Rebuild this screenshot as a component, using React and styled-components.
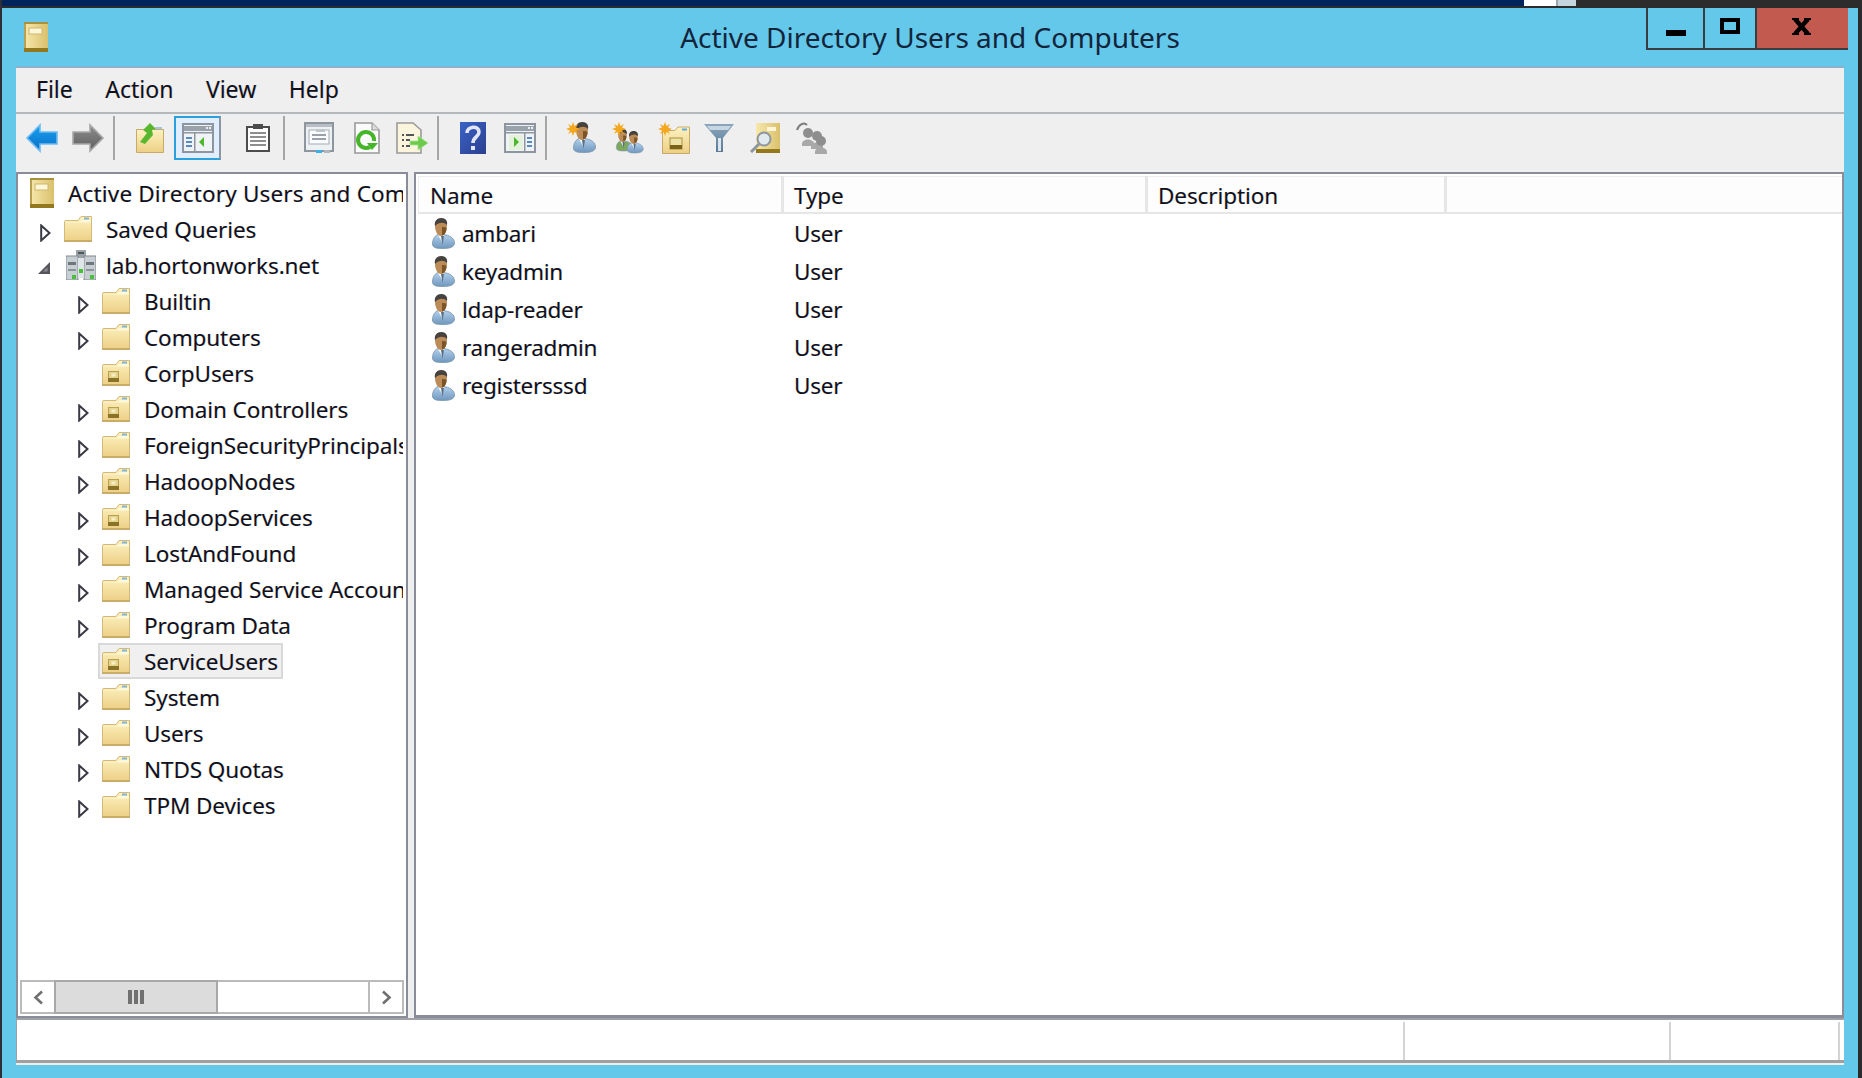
import React from "react";
import styled, { createGlobalStyle } from "styled-components";

const GlobalStyle = createGlobalStyle`
  html, body {
    margin: 0;
    height: 100%;
    overflow: hidden;
    background: #63c8ea;
    font-family: "Noto Sans", "Open Sans", sans-serif;
    color: #10101c;
    text-shadow: -0.5px 0 0 rgba(255, 170, 40, 0.3), 0.5px 0 0 rgba(30, 140, 255, 0.3);
  }
`;

const Page = styled.div`
  width: 1862px;
  height: 1078px;
  display: flex;
  flex-direction: column;
  border-left: 2px solid #2c2f33;
  border-right: 4px solid #2c2c2c;
  box-sizing: border-box;
  overflow: hidden;
  background: #63c8ea;
`;

const TopStrip = styled.div`
  height: 8px;
  margin: 0 -4px 0 -2px;
  display: flex;
  background: #2c2c2c;
`;

const TaskNavy = styled.div`
  width: 1524px;
  height: 6px;
  background: #00245c;
`;

const TaskWhite = styled.div`
  width: 32px;
  height: 6px;
  background: #fff;
`;

const TaskGrey = styled.div`
  width: 20px;
  height: 6px;
  background: #c5d5dd;
  border-left: 2px solid #9aa5ab;
  box-sizing: border-box;
`;

const TitleBar = styled.div`
  height: 58px;
  display: grid;
  grid-template-columns: 1fr auto 1fr;
  align-items: start;
  padding-left: 10px;
  padding-right: 10px;
`;

const TitleIcon = styled.div`
  padding: 14px 0 0 12px;
  line-height: 0;
`;

const TitleText = styled.div`
  padding-top: 11px;
  font-size: 28px;
  line-height: 36px;
  color: #14243a;
  white-space: nowrap;
  text-shadow: none;
`;

const WindowButtons = styled.div`
  justify-self: end;
  display: flex;
  height: 42px;
  border: 2px solid #3a3d40;
  border-top: 0;
  box-sizing: border-box;
`;

const WindowButton = styled.div`
  width: ${(p) => p.$w}px;
  display: flex;
  align-items: center;
  justify-content: center;
  padding-right: 2px;
  box-sizing: content-box;
  margin-right: -2px;
  background: ${(p) => (p.$close ? "#c25a50" : "transparent")};
  border-left: ${(p) => (p.$first ? "0" : "2px solid #3a3d40")};
`;

const Client = styled.div`
  margin: 0 14px 13px 14px;
  flex: 1;
  display: flex;
  flex-direction: column;
  background: #efefef;
  border-top: 2px solid #8ab2c8;
`;

const MenuBar = styled.div`
  display: flex;
  align-items: center;
  gap: 32.5px;
  padding: 0 0 2px 20px;
  box-sizing: content-box;
  height: 42px;
  border-bottom: 2px solid #b5b8bb;
  font-size: 23px;
`;

const Toolbar = styled.div`
  display: flex;
  align-items: flex-start;
  padding: 2px 0 0 10px;
  box-sizing: border-box;
  height: 58px;
`;

const ToolSlot = styled.div`
  height: 44px;
  width: ${(p) => p.$w}px;
  margin-left: ${(p) => p.$ml}px;
  display: flex;
  align-items: center;
  justify-content: center;
  box-sizing: border-box;
  ${(p) => p.$active && "background: #e0eeff; border: 2px solid #2aa0dc; border-right-color: #8a97a0;"}
`;

const ToolSep = styled.div`
  height: 44px;
  width: 2px;
  margin-left: ${(p) => p.$ml}px;
  background: #a4a6a8;
`;

const Panes = styled.div`
  height: 846px;
  display: flex;
  gap: 6px;
`;

const TreePane = styled.div`
  width: 392px;
  display: flex;
  flex-direction: column;
  background: #fff;
  border: 2px solid #8a8d99;
  box-sizing: border-box;
`;

const TreeScroll = styled.div`
  flex: 1;
  margin: 1px 3px 0 0;
  overflow: hidden;
`;

const TreeRow = styled.div`
  height: 36px;
  display: flex;
  align-items: center;
  padding-left: ${(p) => p.$indent}px;
  white-space: nowrap;
  font-size: 22.5px;
  letter-spacing: -0.1px;
`;

const Arrow = styled.div`
  width: 24px;
  flex: none;
  display: flex;
  line-height: 0;
  padding-top: ${(p) => (p.$open ? 5 : 7)}px;
  margin-left: ${(p) => (p.$open ? -2 : 0)}px;
  margin-right: ${(p) => (p.$open ? 2 : 0)}px;
`;

const TreeLabel = styled.div`
  height: 36px;
  display: flex;
  align-items: center;
  gap: 14px;
  margin-left: -4px;
  padding: 0 3px 0 2px;
  border: 2px solid ${(p) => (p.$selected ? "#d9d9d9" : "transparent")};
  background: ${(p) => (p.$selected ? "#f0f0f0" : "transparent")};
  box-sizing: border-box;
`;

const RootLabel = styled.div`
  display: flex;
  align-items: center;
  gap: 14px;
  letter-spacing: 0.17px;
`;

const ScrollBar = styled.div`
  height: 34px;
  margin: 0 2px 2px 2px;
  display: flex;
  border: 2px solid #bbb;
  box-sizing: border-box;
  background: #fff;
`;

const ScrollButton = styled.div`
  width: 32px;
  display: flex;
  align-items: center;
  justify-content: center;
  border-left: ${(p) => (p.$right ? "2px solid #bbb" : "0")};
  flex: none;
`;

const ScrollThumb = styled.div`
  width: 164px;
  display: flex;
  align-items: center;
  justify-content: center;
  box-sizing: border-box;
  background: #dcdcdc;
  border: 2px solid #a8a8a8;
  margin: -2px 0;
  flex: none;
`;

const ScrollTrack = styled.div`
  flex: 1;
`;

const ListPane = styled.div`
  flex: 1;
  background: #fff;
  border: 2px solid #8a8d99;
  border-bottom-width: 3px;
  box-sizing: border-box;
`;

const ListHeader = styled.div`
  height: 38px;
  display: flex;
  margin: 2px 0 0 2px;
  border-bottom: 2px solid #e6e6e6;
  background: #fdfdfd;
  box-shadow: inset 1px 1px 0 #eeeeee;
  font-size: 22.5px;
  letter-spacing: -0.1px;
  box-sizing: border-box;
`;

const HeaderCell = styled.div`
  width: ${(p) => p.$w}px;
  padding: 2px 0 0 ${(p) => p.$pad}px;
  box-sizing: border-box;
  display: flex;
  align-items: center;
  border-right: 3px solid #e6e6e6;
`;

const ListRow = styled.div`
  height: 38px;
  display: flex;
  align-items: center;
  margin-left: 2px;
  padding-top: 1px;
  box-sizing: border-box;
  font-size: 22.5px;
  letter-spacing: -0.25px;
`;

const NameCell = styled.div`
  width: 366px;
  padding-left: 14px;
  box-sizing: border-box;
  display: flex;
  align-items: center;
  gap: 7px;
`;

const TypeCell = styled.div`
  padding-left: 10px;
`;

const StatusBar = styled.div`
  height: 45px;
  display: flex;
  justify-content: flex-end;
  background: #fff;
  border-top: 2px solid #a0a0a8;
  border-bottom: 3px solid #a0a0a0;
  border-left: 1px solid #a0a0a0;
  box-sizing: border-box;
  padding: 2px 3px 0 0;
`;

const StatusCell = styled.div`
  width: ${(p) => p.$w}px;
  border-left: 2px solid #d4d4d4;
`;

const GradientDefs = styled.svg`
  display: block;
  width: 0;
  height: 0;
`;

const DomainSvg = styled.svg`
  margin: 0 -4px 0 2px;
  flex: none;
`;

const Defs = () => (
  <GradientDefs>
    <defs>
      <linearGradient id="gFolder" x1="0" y1="0" x2="0" y2="1">
        <stop offset="0" stopColor="#fdf2c0" />
        <stop offset="1" stopColor="#edcf85" />
      </linearGradient>
      <linearGradient id="gBook" x1="0" y1="0" x2="1" y2="0">
        <stop offset="0" stopColor="#f7e9ac" />
        <stop offset="1" stopColor="#d9c06c" />
      </linearGradient>
      <linearGradient id="gBlue" x1="0" y1="0" x2="0" y2="1">
        <stop offset="0" stopColor="#17a1f2" />
        <stop offset="1" stopColor="#0c6fc4" />
      </linearGradient>
      <linearGradient id="gGrey" x1="0" y1="0" x2="0" y2="1">
        <stop offset="0" stopColor="#8c8c8c" />
        <stop offset="1" stopColor="#5f5f5f" />
      </linearGradient>
      <linearGradient id="gBody" x1="0" y1="0" x2="0" y2="1">
        <stop offset="0" stopColor="#b4d2ee" />
        <stop offset="1" stopColor="#6f97bd" />
      </linearGradient>
      <linearGradient id="gHelp" x1="0" y1="0" x2="1" y2="1">
        <stop offset="0" stopColor="#3a63c6" />
        <stop offset="1" stopColor="#2a3f8e" />
      </linearGradient>
      <linearGradient id="gFunnel" x1="0" y1="0" x2="0" y2="1">
        <stop offset="0" stopColor="#8aa6be" />
        <stop offset="1" stopColor="#5c7a96" />
      </linearGradient>
    </defs>
  </GradientDefs>
);

const BookIcon = ({ w = 24, h = 30 }) => (
  <svg width={w} height={h} viewBox="0 0 24 30">
    <rect width="24" height="30" fill="url(#gBook)" />
    <rect width="24" height="2" fill="#a8903f" />
    <rect y="26" width="24" height="4" fill="#94781f" />
    <rect x="0" y="2" width="2" height="24" fill="#b8a050" />
    <rect x="5" y="6" width="13" height="6" fill="#fdf7d8" stroke="#cdb870" />
  </svg>
);

const FolderIcon = ({ ou }) => (
  <svg width="28" height="26" viewBox="0 0 28 26">
    <path d="M0.5 5.5 Q0.5 4.5 2 4.5 H14 L17 0.5 H27.5 V25.5 H0.5 Z" fill="url(#gFolder)" stroke="#d3b97a" />
    <rect x="20" y="1.5" width="5" height="2" fill="#7fb2dc" />
    <path d="M1 6 H14.5 L17.5 4 H27 V6.5 H1 Z" fill="#fef8da" />
    <rect x="0" y="24" width="28" height="2" fill="#c9ac6a" />
    {ou && <rect x="6.5" y="11.5" width="10" height="10" fill="#e3d38c" stroke="#b8a050" />}
    {ou && <rect x="9.5" y="13.5" width="4" height="3" fill="#f7efc4" />}
    {ou && <rect x="6" y="18" width="11" height="4" fill="#8a7226" />}
  </svg>
);

const DomainIcon = () => (
  <DomainSvg width="30" height="30" viewBox="0 0 30 30">
    <rect x="10" y="0" width="10" height="26" fill="#9aa3a8" />
    <rect x="0" y="6" width="12" height="24" fill="#c8cfd2" stroke="#808a8f" />
    <rect x="18" y="6" width="12" height="24" fill="#c8cfd2" stroke="#808a8f" />
    <rect x="12" y="8" width="6" height="20" fill="#dfe4e6" />
    <rect x="2" y="12" width="8" height="3" fill="#6d777c" />
    <rect x="20" y="12" width="8" height="3" fill="#6d777c" />
    <rect x="2" y="19" width="8" height="2" fill="#8a9499" />
    <rect x="20" y="19" width="8" height="2" fill="#8a9499" />
    <rect x="12" y="2" width="6" height="2" fill="#4d565a" />
    <rect x="6" y="25" width="4" height="4" fill="#48c038" />
    <rect x="24" y="25" width="4" height="4" fill="#48c038" />
    <rect x="13" y="19" width="4" height="4" fill="#48c038" />
  </DomainSvg>
);

const UserFigure = ({ x = 0, y = 0, s = 1, body = "url(#gBody)" }) => (
  <g transform={`translate(${x} ${y}) scale(${s})`}>
    <path d="M0.5 26 C0.5 20 4 16 9 16 L14 17 C19 18 22.5 21 22.5 25 C22.5 29 18 30.5 11 30.5 C5 30.5 0.5 30 0.5 26 Z" fill={body} stroke="#7f9ab0" strokeWidth="0.9" />
    <path d="M6 17 L10 24 L12 17 Z" fill="#f2f6fa" />
    <path d="M9 18 L10.5 27 L12 18 Z" fill="#5a6f84" />
    <path d="M3 8 C3 3 5.5 0.5 9 0.5 C12.5 0.5 15 3 15 8 C15 13 12.5 18 9 18 C5.5 18 3 13 3 8 Z" fill="#bc8c58" />
    <path d="M3 8 C2 3 5 0 9.5 0 C13.5 0 16 3 15 7 C12 4 7 4 3 8 Z" fill="#45423f" />
    <path d="M10 9 C12.5 9 14.5 9 14.5 11 C14.5 14 12 17.5 10 17.5 Z" fill="#7d5428" />
  </g>
);

const UserIcon = () => (
  <svg width="23" height="32" viewBox="0 0 23 32">
    <UserFigure />
  </svg>
);

const TreeClosed = () => (
  <svg width="11" height="18" viewBox="0 0 11 18">
    <path d="M1.2 1.5 L9.5 9 L1.2 16.5 Z" fill="#fff" stroke="#3a3a44" strokeWidth="2" />
  </svg>
);

const TreeOpen = () => (
  <svg width="12" height="12" viewBox="0 0 12 12">
    <path d="M12 0 V12 H0 Z" fill="#55555c" />
    <path d="M9.5 5 V9.5 H5 Z" fill="#8c8c90" />
  </svg>
);

const MinGlyph = () => (
  <svg width="20" height="16" viewBox="0 0 20 16">
    <rect y="10" width="20" height="6" fill="#000" />
  </svg>
);

const MaxGlyph = () => (
  <svg width="20" height="16" viewBox="0 0 20 16" style={{ marginBottom: 4 }}>
    <rect x="2" y="2" width="16" height="12" fill="none" stroke="#000" strokeWidth="4" />
  </svg>
);

const CloseGlyph = () => (
  <svg width="19" height="17" viewBox="0 0 19 17" style={{ marginBottom: 4 }}>
    <path d="M3 1 L16 16 M16 1 L3 16" stroke="#000" strokeWidth="4.4" fill="none" />
    <path d="M0 1 H7 M12 1 H19 M0 16 H7 M12 16 H19" stroke="#000" strokeWidth="2" fill="none" />
  </svg>
);

const Chevron = ({ right }) => (
  <svg width="11" height="15" viewBox="0 0 11 15">
    <path d={right ? "M2 1.5 L8.5 7.5 L2 13.5" : "M9 1.5 L2.5 7.5 L9 13.5"} fill="none" stroke="#707070" strokeWidth="2.6" />
  </svg>
);

const GripIcon = () => (
  <svg width="16" height="14" viewBox="0 0 16 14">
    <rect width="4" height="14" fill="#707070" />
    <rect x="6" width="4" height="14" fill="#707070" />
    <rect x="12" width="4" height="14" fill="#707070" />
  </svg>
);

const BackIcon = () => (
  <svg width="32" height="30" viewBox="0 0 32 30">
    <path d="M1 15 L14 2 V9 H31 V21 H14 V28 Z" fill="url(#gBlue)" stroke="#6dbcf2" strokeWidth="1.6" />
  </svg>
);

const ForwardIcon = () => (
  <svg width="32" height="30" viewBox="0 0 32 30">
    <path d="M31 15 L18 2 V9 H1 V21 H18 V28 Z" fill="url(#gGrey)" stroke="#a8a8a8" strokeWidth="1.6" />
  </svg>
);

const UpFolderIcon = () => (
  <svg width="28" height="30" viewBox="0 0 28 30">
    <path d="M0.5 6.5 H27.5 V29.5 H0.5 Z" fill="url(#gFolder)" stroke="#c7a968" />
    <path d="M4 19 L11 10 L7 7 L14 0 L20 6 L16 7 L17 12 L9 21 Z" fill="#58b72e" />
    <path d="M19 5 H26" stroke="#7fb2dc" strokeWidth="1.4" />
  </svg>
);

const PaneFrame = ({ children }) => (
  <>
    <rect x="1" y="1" width="30" height="28" fill="#f0f3f6" stroke="#8d959e" strokeWidth="2" />
    <rect x="2" y="3" width="28" height="5" fill="#9aa3ac" />
    <rect x="24" y="4" width="2" height="2" fill="#e8ecef" />
    <rect x="27" y="4" width="2" height="2" fill="#e8ecef" />
    <rect x="2" y="9" width="28" height="1.5" fill="#8d959e" />
    {children}
  </>
);

const ToggleTreeIcon = () => (
  <svg width="32" height="30" viewBox="0 0 32 30">
    <PaneFrame>
      <rect x="12" y="10" width="1.5" height="18" fill="#8d959e" />
      <rect x="4" y="14" width="6" height="2" fill="#5a8ac4" />
      <rect x="4" y="18" width="6" height="2" fill="#5a8ac4" />
      <rect x="4" y="22" width="6" height="2" fill="#5a8ac4" />
      <path d="M17 19 L22 14 V24 Z" fill="#4eb52c" />
    </PaneFrame>
  </svg>
);

const ActionPaneIcon = () => (
  <svg width="32" height="30" viewBox="0 0 32 30">
    <PaneFrame>
      <rect x="20" y="10" width="1.5" height="18" fill="#8d959e" />
      <rect x="23" y="14" width="5" height="2" fill="#5a8ac4" />
      <rect x="23" y="18" width="5" height="2" fill="#5a8ac4" />
      <rect x="23" y="22" width="5" height="2" fill="#5a8ac4" />
      <rect x="5" y="12" width="14" height="15" fill="#e4f2dc" />
      <path d="M10 14 L15 19 L10 24 Z" fill="#4eb52c" />
    </PaneFrame>
  </svg>
);

const ClipboardIcon = () => (
  <svg width="24" height="28" viewBox="0 0 24 28">
    <rect x="1" y="3" width="22" height="24" fill="#fff" stroke="#4c4c4c" strokeWidth="2" />
    <rect x="7" y="0" width="10" height="5" fill="#4c4c4c" />
    <path d="M4 9 H20 M4 13 H20 M4 17 H20 M4 21 H20" stroke="#8e8e8e" strokeWidth="2" />
  </svg>
);

const PropsIcon = () => (
  <svg width="30" height="32" viewBox="0 0 30 32">
    <rect x="1" y="1" width="28" height="28" fill="#eef1f4" stroke="#8d959e" strokeWidth="2" />
    <rect x="2" y="2" width="26" height="3" fill="#b8bec4" />
    <rect x="5" y="8" width="20" height="14" fill="#fafbfc" stroke="#a6adb4" />
    <rect x="12" y="7" width="9" height="3" fill="#c0c6cc" />
    <path d="M8 13 H22 M8 17 H22" stroke="#9aa1a8" strokeWidth="2" />
    <rect x="12" y="28" width="6" height="3" fill="#38b0e8" />
    <rect x="20" y="28" width="6" height="3" fill="#b0b6bc" />
  </svg>
);

const RefreshIcon = () => (
  <svg width="26" height="32" viewBox="0 0 26 32">
    <path d="M1 1 H18 L25 8 V31 H1 Z" fill="#fbfbfb" stroke="#9a9a9a" strokeWidth="1.6" />
    <path d="M18 1 V8 H25" fill="#dcdcdc" stroke="#9a9a9a" strokeWidth="1.2" />
    <path d="M16 25 A8 8 0 1 1 20 19" fill="none" stroke="#46b52a" strokeWidth="4" />
    <path d="M13 21 H24 L18 28 Z" fill="#46b52a" />
  </svg>
);

const ExportIcon = () => (
  <svg width="32" height="32" viewBox="0 0 32 32">
    <path d="M1 1 H17 L25 8 V31 H1 Z" fill="#faf5dc" stroke="#9a9a9a" strokeWidth="1.6" />
    <path d="M6 13 H18 M6 18 H14 M6 24 H14" stroke="#55555c" strokeWidth="2" strokeDasharray="2 2 8 0" />
    <path d="M14 19 H22 V14 L32 21 L22 28 V23 H14 Z" fill="#6ccb4c" stroke="#a6e48e" strokeWidth="0.8" />
  </svg>
);

const HelpIcon = () => (
  <svg width="26" height="32" viewBox="0 0 26 32">
    <rect width="26" height="32" fill="url(#gHelp)" />
    <path d="M7 11 C7 4 19 3 19 10 C19 15 13 15 13 21" fill="none" stroke="#e2e6f6" strokeWidth="3.6" />
    <rect x="11" y="24" width="4" height="4" fill="#e2e6f6" />
  </svg>
);

const Spark = ({ x = 0, y = 0 }) => (
  <g transform={`translate(${x} ${y})`}>
    <path d="M7 0 L8.5 4 L12 2 L10 5.5 L14 7 L10 8.5 L12 12 L8.5 10 L7 14 L5.5 10 L2 12 L4 8.5 L0 7 L4 5.5 L2 2 L5.5 4 Z" fill="#f4a820" />
  </g>
);

const NewUserIcon = () => (
  <svg width="30" height="32" viewBox="0 0 30 32">
    <UserFigure x="7" y="0" s="1" />
    <Spark />
  </svg>
);

const NewGroupIcon = () => (
  <svg width="32" height="32" viewBox="0 0 32 32">
    <UserFigure x="4" y="7" s="0.72" body="#7ea860" />
    <UserFigure x="15" y="9" s="0.72" />
    <Spark />
  </svg>
);

const NewOuIcon = () => (
  <svg width="32" height="32" viewBox="0 0 32 32">
    <path d="M4.5 8.5 H17 L20 5 H31.5 V31.5 H4.5 Z" fill="url(#gFolder)" stroke="#c7a968" />
    <rect x="24" y="6.5" width="5" height="2" fill="#5fa8e0" />
    <rect x="12" y="16" width="12" height="11" fill="#efe2a8" stroke="#a68f3c" />
    <rect x="12" y="23" width="12" height="4" fill="#7a6318" />
    <Spark />
  </svg>
);

const FilterIcon = () => (
  <svg width="30" height="30" viewBox="0 0 30 30">
    <path d="M0 1 H30 L19 15 V29 H12 V15 Z" fill="url(#gFunnel)" />
    <path d="M3 3 H27 L24 7 H6 Z" fill="#c6d6e2" />
    <rect x="14" y="15" width="3" height="13" fill="#dbe6ee" />
  </svg>
);

const FindIcon = () => (
  <svg width="30" height="30" viewBox="0 0 30 30">
    <rect x="6" y="0" width="24" height="30" fill="url(#gBook)" />
    <rect x="6" y="26" width="24" height="4" fill="#94781f" />
    <rect x="17" y="4" width="9" height="4" fill="#fdf7d8" />
    <circle cx="14" cy="16" r="6.5" fill="#dfe9ee" stroke="#8d959e" strokeWidth="2" />
    <path d="M9 21 L1 29" stroke="#8d959e" strokeWidth="3" />
  </svg>
);

const GreyUser = ({ x, y }) => (
  <g transform={`translate(${x} ${y})`}>
    <circle cx="6" cy="5" r="5" fill="#8e8e8e" />
    <path d="M0 16 C0 10 12 10 12 16 V18 H0 Z" fill="#a8a8a8" />
  </g>
);

const DelegateIcon = () => (
  <svg width="32" height="32" viewBox="0 0 32 32">
    <path d="M1 8 C3 2 8 0 11 3" fill="none" stroke="#7a7a7a" strokeWidth="2" />
    <GreyUser x="6" y="6" />
    <GreyUser x="15" y="9" />
    <GreyUser x="19" y="14" />
  </svg>
);

const toolItems = [
  { w: 32, ml: 0, icon: <BackIcon /> },
  { w: 32, ml: 14, icon: <ForwardIcon /> },
  { sep: true, ml: 9 },
  { w: 28, ml: 21, icon: <UpFolderIcon /> },
  { w: 47, ml: 10, icon: <ToggleTreeIcon />, active: true },
  { w: 24, ml: 25, icon: <ClipboardIcon /> },
  { sep: true, ml: 13 },
  { w: 30, ml: 19, icon: <PropsIcon /> },
  { w: 26, ml: 20, icon: <RefreshIcon /> },
  { w: 32, ml: 16, icon: <ExportIcon /> },
  { sep: true, ml: 9 },
  { w: 26, ml: 21, icon: <HelpIcon /> },
  { w: 32, ml: 18, icon: <ActionPaneIcon /> },
  { sep: true, ml: 9 },
  { w: 30, ml: 19, icon: <NewUserIcon /> },
  { w: 32, ml: 16, icon: <NewGroupIcon /> },
  { w: 32, ml: 14, icon: <NewOuIcon /> },
  { w: 30, ml: 14, icon: <FilterIcon /> },
  { w: 30, ml: 16, icon: <FindIcon /> },
  { w: 32, ml: 16, icon: <DelegateIcon /> },
];

const treeItems = [
  { label: "Saved Queries", level: 1, arrow: "closed" },
  { label: "lab.hortonworks.net", level: 1, arrow: "open", icon: "domain" },
  { label: "Builtin", level: 2, arrow: "closed" },
  { label: "Computers", level: 2, arrow: "closed" },
  { label: "CorpUsers", level: 2, icon: "ou" },
  { label: "Domain Controllers", level: 2, arrow: "closed", icon: "ou" },
  { label: "ForeignSecurityPrincipals", level: 2, arrow: "closed" },
  { label: "HadoopNodes", level: 2, arrow: "closed", icon: "ou" },
  { label: "HadoopServices", level: 2, arrow: "closed", icon: "ou" },
  { label: "LostAndFound", level: 2, arrow: "closed" },
  { label: "Managed Service Accounts", level: 2, arrow: "closed" },
  { label: "Program Data", level: 2, arrow: "closed" },
  { label: "ServiceUsers", level: 2, icon: "ou", selected: true },
  { label: "System", level: 2, arrow: "closed" },
  { label: "Users", level: 2, arrow: "closed" },
  { label: "NTDS Quotas", level: 2, arrow: "closed" },
  { label: "TPM Devices", level: 2, arrow: "closed" },
];

const users = ["ambari", "keyadmin", "ldap-reader", "rangeradmin", "registersssd"];

const App = () => (
  <Page>
    <GlobalStyle />
    <Defs />
    <TopStrip>
      <TaskNavy />
      <TaskWhite />
      <TaskGrey />
    </TopStrip>
    <TitleBar>
      <TitleIcon>
        <BookIcon />
      </TitleIcon>
      <TitleText>Active Directory Users and Computers</TitleText>
      <WindowButtons>
        <WindowButton $w={55} $first>
          <MinGlyph />
        </WindowButton>
        <WindowButton $w={50}>
          <MaxGlyph />
        </WindowButton>
        <WindowButton $w={89} $close>
          <CloseGlyph />
        </WindowButton>
      </WindowButtons>
    </TitleBar>
    <Client>
      <MenuBar>
        <span>File</span>
        <span>Action</span>
        <span>View</span>
        <span>Help</span>
      </MenuBar>
      <Toolbar>
        {toolItems.map((item, i) =>
          item.sep ? (
            <ToolSep key={i} $ml={item.ml} />
          ) : (
            <ToolSlot key={i} $w={item.w} $ml={item.ml} $active={item.active}>
              {item.icon}
            </ToolSlot>
          )
        )}
      </Toolbar>
      <Panes>
        <TreePane>
          <TreeScroll>
            <TreeRow $indent={12}>
              <RootLabel>
                <BookIcon />
                Active Directory Users and Computers
              </RootLabel>
            </TreeRow>
            {treeItems.map((item) => (
              <TreeRow key={item.label} $indent={item.level === 1 ? 22 : 60}>
                <Arrow $open={item.arrow === "open"}>
                  {item.arrow === "closed" && <TreeClosed />}
                  {item.arrow === "open" && <TreeOpen />}
                </Arrow>
                <TreeLabel $selected={item.selected}>
                  {item.icon === "domain" ? <DomainIcon /> : <FolderIcon ou={item.icon === "ou"} />}
                  {item.label}
                </TreeLabel>
              </TreeRow>
            ))}
          </TreeScroll>
          <ScrollBar>
            <ScrollButton>
              <Chevron />
            </ScrollButton>
            <ScrollThumb>
              <GripIcon />
            </ScrollThumb>
            <ScrollTrack />
            <ScrollButton $right>
              <Chevron right />
            </ScrollButton>
          </ScrollBar>
        </TreePane>
        <ListPane>
          <ListHeader>
            <HeaderCell $w={366} $pad={12}>Name</HeaderCell>
            <HeaderCell $w={364} $pad={10}>Type</HeaderCell>
            <HeaderCell $w={299} $pad={10}>Description</HeaderCell>
          </ListHeader>
          {users.map((name) => (
            <ListRow key={name}>
              <NameCell>
                <UserIcon />
                {name}
              </NameCell>
              <TypeCell>User</TypeCell>
            </ListRow>
          ))}
        </ListPane>
      </Panes>
      <StatusBar>
        <StatusCell $w={264} />
        <StatusCell $w={167} />
        <StatusCell $w={1} />
      </StatusBar>
    </Client>
  </Page>
);

export default App;
